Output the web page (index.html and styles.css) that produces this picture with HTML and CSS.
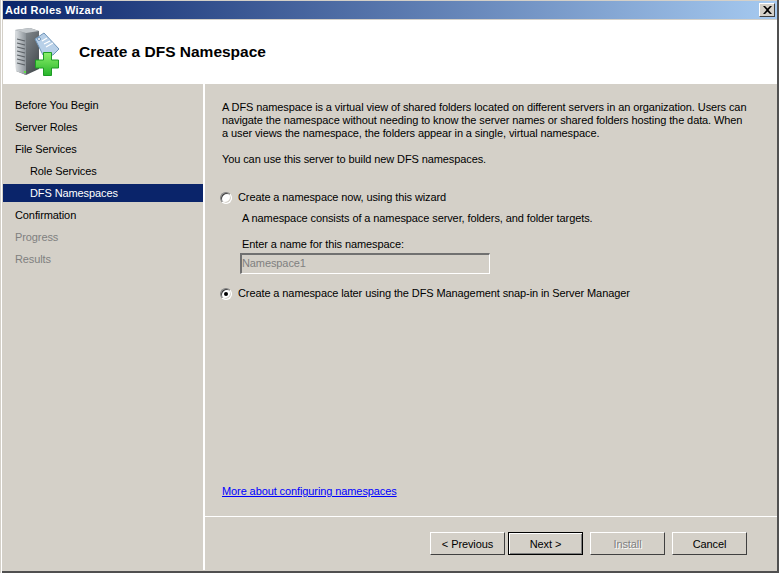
FILE: index.html
```html
<!DOCTYPE html>
<html lang="en">
<head>
<meta charset="utf-8">
<title>Add Roles Wizard</title>
<link rel="stylesheet" href="styles.css">
</head>
<body>
<div class="window">
  <div class="titlebar">
    <span class="title">Add Roles Wizard</span>
    <span class="close">
      <svg width="9" height="8" viewBox="0 0 9 8"><path d="M0 0h2l2.500 2.500L7 0h2L5.500 4 9 8H7L4.500 5.500 2 8H0l3.500-4z" fill="#000"/></svg>
    </span>
  </div>
  <header class="header">
    <svg class="logo" width="44" height="48" viewBox="0 0 44 48">
      <defs>
        <linearGradient id="front" x1="0" x2="1" y1="0" y2="0"><stop offset="0" stop-color="#dfe3e6"/><stop offset="1" stop-color="#8b9298"/></linearGradient>
        <linearGradient id="side" x1="0" x2="1" y1="0" y2="1"><stop offset="0" stop-color="#9aa0a5"/><stop offset="1" stop-color="#3d4347"/></linearGradient>
        <linearGradient id="plus" x1="0" x2="0" y1="0" y2="1"><stop offset="0" stop-color="#8cf06a"/><stop offset="1" stop-color="#27b52b"/></linearGradient>
      </defs>
      <path d="M0 2 15 0 24 3V41L11 47 1 43z" fill="url(#side)"/>
      <path d="M0 2 11 5V47L1 43z" fill="url(#front)"/>
      <path d="M0 2 15 0 24 3 11 5z" fill="#c3c8cc"/>
      <path d="M2 11 10 13M2 15 10 17M2 19 10 21M2 23 10 25M2 27 10 29M2 31 10 33M2 35 10 37" stroke="#5a6065" stroke-width="1.200"/>
      <rect x="9" y="43" width="2" height="2" fill="#5fe04a"/>
      <path d="M20 11 29 5 44 21 38 27 28 27z" fill="#b8d0e8" stroke="#6f94b8"/>
      <circle cx="24" cy="11" r="1.500" fill="#fff" stroke="#6f94b8"/>
      <path d="M27 13 32 10M29 16 35 13M31 19 38 15" stroke="#fff" stroke-width="1.200"/>
      <path d="M28.500 24.500h8v7.500h7v8h-7v7.500h-8V40h-8v-8h8z" fill="url(#plus)" stroke="#1d9c25"/>
    </svg>
    <h1 class="heading">Create a DFS Namespace</h1>
  </header>
  <div class="body">
    <nav class="nav">
      <a class="step">Before You Begin</a>
      <a class="step">Server Roles</a>
      <a class="step">File Services</a>
      <a class="step sub">Role Services</a>
      <a class="step sub current">DFS Namespaces</a>
      <a class="step">Confirmation</a>
      <a class="step off">Progress</a>
      <a class="step off">Results</a>
    </nav>
    <main class="pane">
      <div class="content">
        <p class="intro">A DFS namespace is a virtual view of shared folders located on different servers in an organization. Users can<br>navigate the namespace without needing to know the server names or shared folders hosting the data. When<br>a user views the namespace, the folders appear in a single, virtual namespace.</p>
        <p class="lead">You can use this server to build new DFS namespaces.</p>
        <label class="choice first"><span class="radio"></span>Create a namespace now, using this wizard</label>
        <p class="note">A namespace consists of a namespace server, folders, and folder targets.</p>
        <p class="field-label">Enter a name for this namespace:</p>
        <div class="field">Namespace1</div>
        <label class="choice second"><span class="radio on"></span>Create a namespace later using the DFS Management snap-in in Server Manager</label>
        <a class="more" href="#">More about configuring namespaces</a>
      </div>
      <footer class="footer">
        <button class="btn prev">&lt; Previous</button>
        <button class="btn default">Next &gt;</button>
        <button class="btn disabled">Install</button>
        <button class="btn">Cancel</button>
      </footer>
    </main>
  </div>
</div>
</body>
</html>
```
FILE: styles.css
```css
* { box-sizing: border-box; }
html, body { margin: 0; height: 100%; background: #fff; }
body { font: 11px/13px "Liberation Sans", sans-serif; letter-spacing: -0.1px; color: #000; overflow: hidden; }
.window { width: 779px; height: 573px; background: #d4d0c8; padding: 1px 2px 3px 3px; display: flex; flex-direction: column; box-shadow: inset 1px 0 0 #d4d0c8, inset 2px 0 0 #fff, inset -2px -2px 0 #505050; }
.titlebar { height: 18px; flex: none; display: flex; align-items: center; justify-content: space-between; padding: 0 2px; background: linear-gradient(90deg, #0a246a, #a6caf0); }
.title { color: #fff; font: bold 11px "Liberation Sans", sans-serif; letter-spacing: 0.25px; }
.close { width: 16px; height: 14px; background: #d4d0c8; border: 1px solid; border-color: #fff #404040 #404040 #fff; display: flex; align-items: center; justify-content: center; }
.header { height: 64px; flex: none; background: #fff; display: flex; align-items: center; padding-left: 12px; gap: 20px; margin-top: 1px; }
.logo { flex: none; }
.heading { margin: 0; font: bold 15.500px "Liberation Sans", sans-serif; letter-spacing: 0; }
.body { flex: 1; display: flex; min-height: 0; }
.nav { width: 202px; flex: none; border-right: 2px solid #fff; padding-top: 12px; display: flex; flex-direction: column; gap: 4px; }
.step { height: 18px; line-height: 18px; padding-left: 12px; }
.sub { padding-left: 27px; }
.current { background: #0a246a; color: #fff; }
.off { color: #808080; }
.pane { flex: 1; display: flex; flex-direction: column; min-width: 0; }
.content { flex: 1; padding: 17px 10px 0 17px; display: flex; flex-direction: column; }
.intro { margin: 0; white-space: nowrap; }
.lead { margin: 13px 0 0; }
.choice { display: flex; align-items: center; gap: 6px; margin-left: -2px; }
.first { margin-top: 25px; }
.second { margin-top: 13px; }
.radio { width: 12px; height: 12px; border-radius: 50%; background: #fff; border: 1px solid; border-color: #808080 #fff #fff #808080; box-shadow: inset 1px 1px 0 #404040, inset -1px -1px 0 #d4d0c8; display: flex; align-items: center; justify-content: center; }
.on::after { content: ""; width: 4px; height: 4px; border-radius: 50%; background: #000; }
.note { margin: 8px 0 0 20px; }
.field-label { margin: 13px 0 0 20px; }
.field { margin: 2px 0 0 18px; width: 250px; height: 21px; line-height: 17px; border: 2px solid; border-color: #707070 #fff #fff #707070; border-width: 2px 1px 1px 2px; color: #808080; }
.more { margin-top: auto; margin-bottom: 18px; color: #00f; }
.footer { height: 54px; flex: none; border-top: 1px solid #fff; display: flex; align-items: flex-start; padding: 15px 0 0 225px; gap: 7px; }
.btn { width: 75px; height: 23px; font: 11px "Liberation Sans", sans-serif; letter-spacing: -0.1px; color: #000; background: #d4d0c8; border: 1px solid; border-color: #fff #404040 #404040 #fff; padding: 0; }
.prev { margin-right: -4px; }
.default { border-color: #000; box-shadow: inset 1px 1px 0 #fff, inset -1px -1px 0 #808080; }
.disabled { color: #808080; text-shadow: 1px 1px 0 #fff; }
```
